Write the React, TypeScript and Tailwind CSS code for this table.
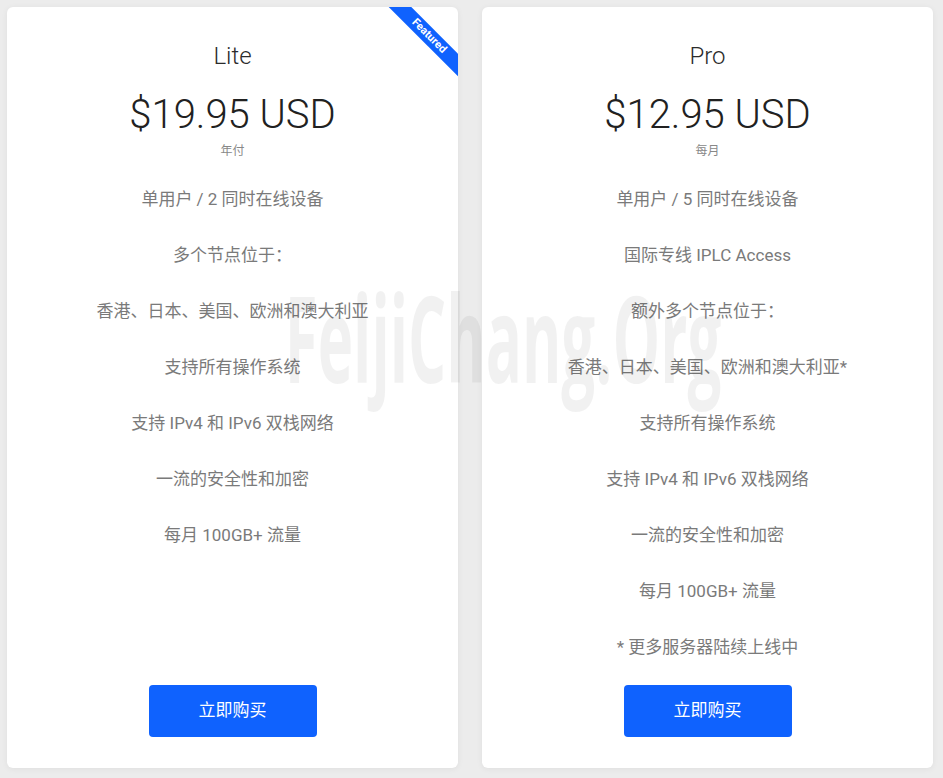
import React from 'react';

type Plan = {
    name: string;
    price: string;
    period: string;
    features: string[];
    featured?: boolean;
};

const plans: Plan[] = [
    {
        name: 'Lite',
        price: '$19.95 USD',
        period: '年付',
        featured: true,
        features: [
            '单用户 / 2 同时在线设备',
            '多个节点位于：',
            '香港、日本、美国、欧洲和澳大利亚',
            '支持所有操作系统',
            '支持 IPv4 和 IPv6 双栈网络',
            '一流的安全性和加密',
            '每月 100GB+ 流量',
        ],
    },
    {
        name: 'Pro',
        price: '$12.95 USD',
        period: '每月',
        features: [
            '单用户 / 5 同时在线设备',
            '国际专线 IPLC Access',
            '额外多个节点位于：',
            '香港、日本、美国、欧洲和澳大利亚*',
            '支持所有操作系统',
            '支持 IPv4 和 IPv6 双栈网络',
            '一流的安全性和加密',
            '每月 100GB+ 流量',
            '* 更多服务器陆续上线中',
        ],
    },
];

function PlanCard({ plan }: { plan: Plan }) {
    return (
        <div className="relative flex h-[761px] w-[451px] flex-col items-center overflow-hidden rounded-[6px] bg-white pt-[33px] pb-[31px] shadow-[0_1px_6px_rgba(0,0,0,0.06)]">
            {/* Ribbon */}
            {plan.featured && (
                <div className="absolute top-[21px] right-[-21px] flex h-[16px] w-[100px] rotate-45 items-center justify-center bg-[#0f62fe] text-[11px] font-bold text-white">
                    Featured
                </div>
            )}

            <h3 className="text-[24px] leading-[32px] font-light text-[#2b2b2b]">{plan.name}</h3>
            <div className="mt-[20px] text-[40px] leading-[46px] font-light text-[#212121]">{plan.price}</div>
            <div className="mt-[5px] text-[12px] leading-[16px] text-[#888]">{plan.period}</div>

            <ul className="mt-[12px] flex flex-col items-center">
                {plan.features.map((f) => (
                    <li key={f} className="text-[17px] leading-[56px] text-[#7a7a7a]">
                        {f}
                    </li>
                ))}
            </ul>

            <button className="mt-auto h-[52px] w-[168px] rounded-[4px] bg-[#0f62fe] text-[17px] text-white">
                立即购买
            </button>
        </div>
    );
}

export default function App() {
    return (
        <div
            className="relative h-[778px] w-[943px] overflow-hidden bg-[#ececec] pt-[7px] pl-[7px]"
            style={{ fontFamily: 'Roboto, "Noto Sans CJK SC", sans-serif' }}
        >
            <div className="flex gap-[24px]">
                {plans.map((p) => (
                    <PlanCard key={p.name} plan={p} />
                ))}
            </div>

            {/* Watermark */}
            <div className="pointer-events-none absolute top-[262px] left-[503px] -translate-x-1/2 scale-x-[0.5] text-[120px] leading-[150px] font-bold whitespace-nowrap text-black/[0.055]" style={{ fontFamily: '"Open Sans", sans-serif' }}>
                FeijiChang.Org
            </div>
        </div>
    );
}
